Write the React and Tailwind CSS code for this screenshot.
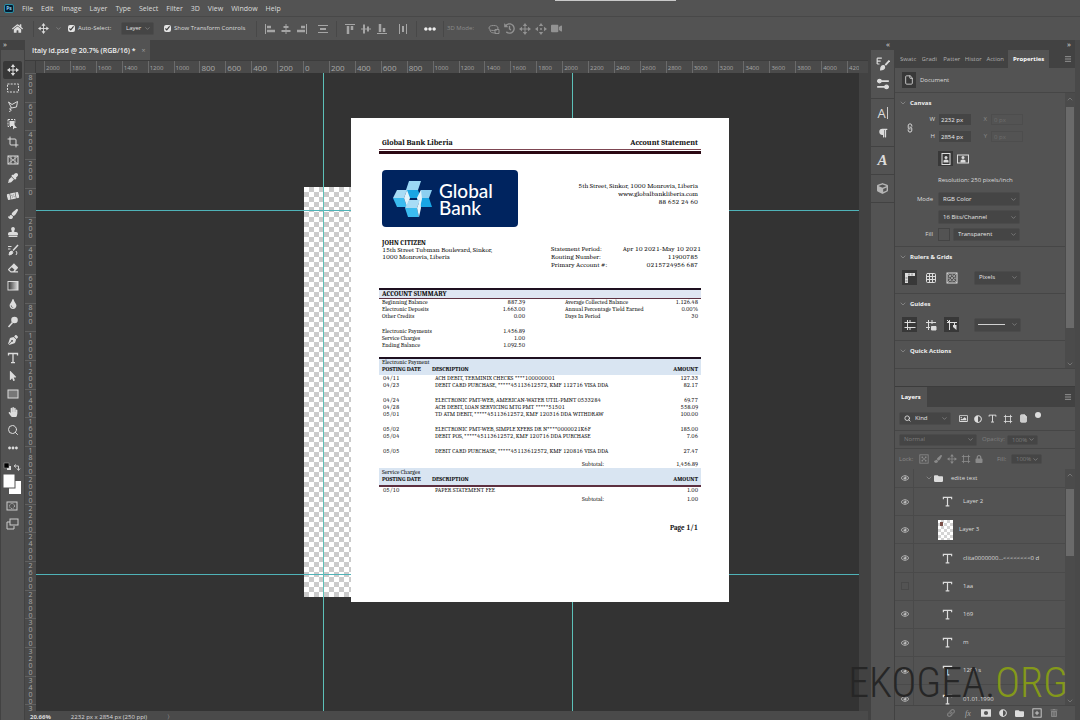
import React, { useState } from 'react';
import { ChevronDown, ChevronUp, Menu, File, Grid3x3, Crop, Search } from 'lucide-react';
import {
  FaHome, FaEyeDropper, FaPaintBrush, FaStamp, FaEraser, FaTint, FaBandAid, FaPenNib,
  FaMousePointer, FaHandPaper, FaEllipsisH, FaFolder, FaLock, FaTrashAlt, FaAdjust,
  FaCube, FaParagraph, FaRegEye, FaLink, FaVideo, FaHistory, FaRegImage,
} from 'react-icons/fa';

const menus = ['File', 'Edit', 'Image', 'Layer', 'Type', 'Select', 'Filter', '3D', 'View', 'Window', 'Help'];

const hRuler = [2000, 1800, 1600, 1400, 1200, 1000, 800, 600, 400, 200, 0, 200, 400, 600, 800, 1000, 1200,
  1400, 1600, 1800, 2000, 2200, 2400, 2600, 2800, 3000, 3200, 3400, 3600, 3800, 4000, 4200];

const vRuler = [800, 600, 400, 200, 0, 200, 400, 600, 800, 1000, 1200, 1400, 1600, 1800, 2000, 2200, 2400,
  2600, 2800, 3000, 3200, 3400, 3600];

/* ---------- small drawings ---------- */

function Svg({ size = 12, children, className = '' }) {
  return (
    <svg
      width={size}
      height={size}
      viewBox="0 0 12 12"
      fill="none"
      stroke="currentColor"
      strokeWidth="1"
      className={className}
      aria-hidden="true"
    >
      {children}
    </svg>
  );
}

const MoveIcon = ({ size = 12 }) => (
  <Svg size={size}>
    <path d="M6 2v8M2 6h8" />
    <path d="M6 0 8.200 3H3.800zM6 12 8.200 9H3.800zM0 6 3 3.800v4.400zM12 6 9 3.800v4.400z" fill="currentColor" stroke="none" />
  </Svg>
);

const MarqueeIcon = () => (
  <Svg><rect x=".5" y="2" width="11" height="8" strokeDasharray="2 1.2" /></Svg>
);

const LassoIcon = () => (
  <Svg><path d="M1.500 2 5 4.500 10.500 1.500 9.500 7 4.500 8 1.500 2M4.500 8C2 8 2 10 4 9.500 4.500 11 3 11.500 2 11.500" /></Svg>
);

const ObjectSelectIcon = () => (
  <Svg>
    <path d="M1 1.500h7v3M1 1.500v7h3" strokeDasharray="2 1" />
    <rect x="3" y="3.500" width="4" height="4" fill="currentColor" />
    <path d="M6 5.500v6l1.500-1.500H10z" fill="currentColor" stroke="none" />
  </Svg>
);

const FrameIcon = () => (
  <Svg><rect x="1" y="2" width="10" height="8" /><path d="M1 2l10 8M11 2 1 10M4 2v8M8 2v8" strokeWidth=".7" /></Svg>
);

const HistoryBrushIcon = () => (
  <Svg>
    <path d="M11 1 6 6.500" strokeWidth="1.500" />
    <path d="M2 11q0-4 3-4 2.500 3-3 4z" fill="currentColor" />
    <path d="M1 2.500h3.500M1 5h2.500M9 7q2 2 0 4" />
  </Svg>
);

const GradientIcon = () => (
  <Svg>
    <defs>
      <linearGradient id="gradTool"><stop stopColor="#333" /><stop offset="1" stopColor="#ddd" /></linearGradient>
    </defs>
    <rect x="1" y="1.500" width="10" height="8.500" fill="url(#gradTool)" />
  </Svg>
);

const DodgeIcon = () => (
  <Svg><circle cx="7.500" cy="4" r="3.300" fill="currentColor" stroke="none" /><path d="M5.500 6.500 1.500 11" strokeWidth="1.500" /></Svg>
);

const TypeIcon = ({ size = 12 }) => (
  <Svg size={size}><path d="M1.500 3.500V1.500h9v2M6 1.500v9M4 10.700h4" strokeWidth="1.300" /></Svg>
);

const RectIcon = () => (
  <Svg><rect x="1" y="2" width="10" height="8" fill="#777" /></Svg>
);

const AlignIcon = ({ kind }) => (
  <Svg>
    {kind === 'left' && <path d="M1.500 1v10" />}
    {kind === 'left' && <path d="M3 4h4M3 8h8" strokeWidth="2.500" />}
    {kind === 'center' && <path d="M6 1v10" />}
    {kind === 'center' && <path d="M3.500 4h5M1.500 8h9" strokeWidth="2" />}
    {kind === 'right' && <path d="M10.500 1v10" />}
    {kind === 'right' && <path d="M5 4h4M1 8h8" strokeWidth="2.500" />}
    {kind === 'spread' && <path d="M1 2.500h10M1 9.500h10" />}
    {kind === 'spread' && <path d="M3 6h6" strokeWidth="2" />}
    {kind === 'top' && <path d="M1 1.500h10" />}
    {kind === 'top' && <path d="M4 3v8M8 3v4" strokeWidth="2.500" />}
    {kind === 'middle' && <path d="M1 6h10" />}
    {kind === 'middle' && <path d="M4 1.500v9M8 3.500v5" strokeWidth="2" />}
    {kind === 'bottom' && <path d="M1 10.500h10" />}
    {kind === 'bottom' && <path d="M4 1v8M8 5v4" strokeWidth="2.500" />}
    {kind === 'columns' && <path d="M2.500 1v10M9.500 1v10" />}
    {kind === 'columns' && <path d="M6 3v6" strokeWidth="2" />}
  </Svg>
);

const OrbitIcon = () => (
  <Svg><ellipse cx="5.500" cy="5" rx="4.500" ry="2.500" /><path d="M2 7c0 3 4 3 6 3M7 6.500h4v4H7z" /></Svg>
);

const SlideIcon = () => (
  <Svg>
    <path d="M6 5v2M5 6h2" />
    <path d="M6 0 8.200 3H3.800zM6 12 8.200 9H3.800zM0 6 3 3.800v4.400zM12 6 9 3.800v4.400z" fill="currentColor" stroke="none" />
  </Svg>
);

const PortraitIcon = ({ wide }) => (
  <Svg>
    {wide ? <rect x=".5" y="2" width="11" height="8" /> : <rect x="2" y=".5" width="8" height="11" />}
    <circle cx="6" cy="4.500" r="1.500" fill="currentColor" stroke="none" />
    <path d="M3.500 9.500V7.500q2.500-2 5 0v2z" fill="currentColor" stroke="none" />
  </Svg>
);

const RulerIcon = () => (
  <Svg><path d="M2.500 11V2.500H11" strokeWidth="3" /><path d="M5 1.500v2M8 1.500v2M1.500 6h2M1.500 9h2" stroke="#383838" strokeWidth=".6" /></Svg>
);

const PixelGridIcon = () => (
  <Svg><rect x="1" y="1" width="10" height="10" /><circle cx="6" cy="6" r="3" strokeDasharray="1 1" /><path d="M1 1l10 10M11 1 1 11" strokeWidth=".5" /></Svg>
);

const GuidesIcon = ({ kind }) => (
  <Svg>
    <path d="M3.500 1v10" />
    {kind === 'plain' && <path d="M.5 3.500h11M.5 8.500h11M6 1v2M6 9v2" />}
    {kind === 'lock' && <path d="M1 3.500h10M1 8.500h4M7 1v4" />}
    {kind === 'lock' && <path d="M6.500 7.500h4.500v3.500H6.500z" fill="currentColor" />}
    {kind === 'smart' && <path d="M1 3.500h10M8.500 4v3M1 1l2 2" />}
    {kind === 'smart' && <path d="M7 6h3.500v5L7 8z" fill="currentColor" stroke="none" />}
  </Svg>
);

const SlidersIcon = () => (
  <Svg size={14}><path d="M1 3.500h10M1 8.500h10" strokeWidth="1.400" /><circle cx="3" cy="3.500" r="1.500" fill="currentColor" /><circle cx="9" cy="8.500" r="1.500" fill="currentColor" /></Svg>
);

const BrushSettingsIcon = () => (
  <Svg size={14}><path d="M1 1h4M1 3.500h3M1 6h2M1 1v5" /><path d="M11.500 3 8 7" strokeWidth="1.500" /><path d="M4 11q0-4 3-3.500Q8.500 10.500 4 11z" fill="currentColor" /></Svg>
);

const ShapeIcon = () => (
  <Svg size={10}><path d="M3 1v10M9 1v10M1 3h10M1 9h10" /></Svg>
);

const CheckerIcon = () => (
  <Svg size={10}><rect x="1" y="1" width="10" height="10" /><path d="M3 3h2v2H3zM7 3h2v2H7zM5 5h2v2H5zM3 7h2v2H3zM7 7h2v2H7z" fill="currentColor" stroke="none" /></Svg>
);

const MaskIcon = () => (
  <Svg size={10}><path d="M0 1.500h12v9H0zM6 3.500a2.500 2.500 0 1 0 0 5 2.500 2.500 0 1 0 0-5z" fill="currentColor" fillRule="evenodd" stroke="none" /></Svg>
);

const PlusBoxIcon = () => (
  <Svg size={10}><rect x="1" y="1" width="10" height="10" /><path d="M6 3.500v5M3.500 6h5" /></Svg>
);

const tools = [
  ['Move', <MoveIcon />], ['Marquee', <MarqueeIcon />], ['Lasso', <LassoIcon />],
  ['Object selection', <ObjectSelectIcon />], ['Crop', <Crop size={12} />], ['Frame', <FrameIcon />],
  ['Eyedropper', <FaEyeDropper size={10} />], ['Healing brush', <FaBandAid size={12} className="-rotate-12" />],
  ['Brush', <FaPaintBrush size={10} />], ['Clone stamp', <FaStamp size={10} />],
  ['History brush', <HistoryBrushIcon />], ['Eraser', <FaEraser size={10} />],
  ['Gradient', <GradientIcon />], ['Blur', <FaTint size={10} />], ['Dodge', <DodgeIcon />],
  ['Pen', <FaPenNib size={10} />], ['Type', <TypeIcon />], ['Path selection', <FaMousePointer size={10} />],
  ['Rectangle', <RectIcon />], ['Hand', <FaHandPaper size={10} />], ['Zoom', <Search size={12} />],
  ['More tools', <FaEllipsisH size={10} />],
];

/* ---------- controls ---------- */

function Select({ label, value, options = [], className = '', dim = false, children }) {
  return (
    <span className={`relative flex items-center rounded-xs border border-[#4b4b4b] bg-[#454545] ${className}`}>
      {children}
      <select
        aria-label={label}
        defaultValue={value}
        disabled={dim}
        className={`h-full w-full appearance-none bg-transparent px-1 outline-none ${dim ? 'text-[#7c7c7c] opacity-100' : 'text-[#e6e6e6]'}`}
      >
        {[value, ...options].map((o) => <option key={o}>{o}</option>)}
      </select>
      <ChevronDown size={7} className="pointer-events-none absolute right-0.5 text-[#999]" />
    </span>
  );
}

function IconButton({ label, active, children }) {
  return (
    <button
      type="button"
      aria-label={label}
      className={`flex h-[15px] w-[15px] items-center justify-center ${active ? 'bg-[#383838]' : ''}`}
    >
      {children}
    </button>
  );
}

const Divider = () => <span className="mx-[3px] h-4 w-px bg-[#484848]" />;

/* ---------- top bars ---------- */

function MenuBar() {
  return (
    <header className="relative flex h-[17px] shrink-0 items-center border-b border-[#484848] bg-[#535353] pl-1">
      <span className="flex h-[9px] w-[10px] items-center justify-center rounded-xs border border-[#2b8fa5] bg-[#001d33] text-[5px] font-bold text-[#8fd0f0]">Ps</span>
      <nav className="flex gap-2 pl-2">
        {menus.map((m) => <button type="button" key={m}>{m}</button>)}
      </nav>
      <span className="absolute top-0 left-[555px] h-px w-[121px] bg-[#c9c9c9]" />
    </header>
  );
}

function OptionsBar() {
  return (
    <div className="flex h-[23px] shrink-0 items-center bg-[#535353] pl-3 text-[6px]">
      <FaHome size={11} />
      <span className="mr-1 ml-2.5 h-4 w-px bg-[#484848]" />
      <MoveIcon size={11} />
      <ChevronDown size={7} className="mx-1.5 text-[#999]" />
      <label className="flex w-[53px] items-center gap-[3px]">
        <input type="checkbox" defaultChecked className="h-[7px] w-[7px] accent-[#e4e4e4]" />
        Auto-Select:
      </label>
      <Select label="Auto-select target" value="Layer" options={['Group']} className="h-[13px] w-[33px]" />
      <label className="ml-2.5 flex w-[86px] items-center gap-[3px] whitespace-nowrap">
        <input type="checkbox" defaultChecked className="h-[7px] w-[7px] accent-[#e4e4e4]" />
        Show Transform Controls
      </label>
      <div className="ml-[3px] flex items-center gap-1 text-[#a5a5a5]">
        <Divider />
        <AlignIcon kind="left" /><AlignIcon kind="center" /><AlignIcon kind="right" />
        <span className="w-px" />
        <AlignIcon kind="spread" />
        <Divider />
        <AlignIcon kind="top" /><AlignIcon kind="middle" /><AlignIcon kind="bottom" />
        <span className="w-px" />
        <AlignIcon kind="columns" />
        <Divider />
        <FaEllipsisH size={12} className="text-[#eee]" />
        <Divider />
      </div>
      <div className="flex items-center gap-1 text-[#929292]">
        <span className="mr-[10px] text-[#8c8c8c]">3D Mode:</span>
        <OrbitIcon /><FaHistory size={11} /><MoveIcon /><SlideIcon /><FaVideo size={11} />
      </div>
    </div>
  );
}

function Toolbar() {
  const [tool, setTool] = useState('Move');
  return (
    <aside className="flex w-[25px] shrink-0 flex-col border-x border-[#424242] bg-[#535353]">
      <div className="h-[10px] bg-[#424242] pl-0.5 text-[8px] leading-[8px]">»</div>
      <div className="mt-[11px] flex flex-col items-center">
        {tools.map(([name, icon]) => (
          <button
            type="button"
            key={name}
            aria-label={name}
            onClick={() => setTool(name)}
            className={`flex h-[18px] w-[19px] items-center justify-center rounded-xs ${tool === name ? 'bg-[#383838]' : ''}`}
          >
            {icon}
          </button>
        ))}
      </div>
      <svg width="23" height="76" viewBox="0 0 23 76" aria-label="Colour swatches">
        <rect x="6" y="9" width="4" height="4" fill="#ddd" />
        <rect x="3" y="6" width="5" height="5" fill="#000" stroke="#aaa" strokeWidth=".5" />
        <path d="M13.500 9h4v4M15 7.500 13 9l2 1.500M16 11.500l1.500 2 1.500-2" fill="none" stroke="#ccc" />
        <rect x="8" y="24" width="12" height="13" fill="#fff" />
        <rect x="2" y="17" width="12" height="14" fill="#fff" stroke="#535353" />
        <rect x="6" y="45" width="10" height="8" fill="none" stroke="#ccc" />
        <circle cx="11" cy="49" r="2.500" fill="none" stroke="#ccc" strokeDasharray="1 1" />
        <rect x="9" y="62" width="8" height="6" fill="none" stroke="#ccc" />
        <path d="M9 65H6v7h7v-3" fill="none" stroke="#ccc" />
      </svg>
    </aside>
  );
}

/* ---------- bank statement ---------- */

const summary = [
  ['Beginning Balance', '887.39', 'Average Collected Balance', '1.126.48'],
  ['Electronic Deposits', '1.663.00', 'Annual Percentage Yield Earned', '0.00%'],
  ['Other Credits', '0.00', 'Days In Period', '30'],
  null,
  ['Electronic Payments', '1.456.89'],
  ['Service Charges', '1.00'],
  ['Ending Balance', '1.092.50'],
];

const payments = [
  ['04/11', 'ACH DEBIT, TERMINIX CHECKS ****100000001', '127.33'],
  ['04/23', 'DEBIT CARD PURCHASE, *****45113612572, KMF 112716 VISA DDA', '82.17'],
  null,
  ['04/24', 'ELECTRONIC PMT-WEB, AMERICAN-WATER UTIL-PMNT 0533284', '69.77'],
  ['04/28', 'ACH DEBIT, LOAN SERVICING MTG PMT *****51501', '558.09'],
  ['05/01', 'TD ATM DEBIT, *****45113612572, KMF 120316 DDA WITHDRAW', '100.00'],
  null,
  ['05/02', 'ELECTRONIC PMT-WEB, SIMPLE XFERS DR N****0000021K6F', '185.00'],
  ['05/04', 'DEBIT POS, *****45113612572, KMF 120716 DDA PURCHASE', '7.06'],
  null,
  ['05/05', 'DEBIT CARD PURCHASE, *****45113612572, KMF 120816 VISA DDA', '27.47'],
];

function BankLogo() {
  return (
    <div className="flex h-[57px] w-[136px] items-center rounded-[4px] bg-[#00245f] pl-[11px] text-white">
      <svg width="40" height="38" viewBox="0 0 40 38" aria-hidden="true">
        <path d="M16 1h12l-3 9H13z" fill="#9bd8f5" />
        <path d="M13 10h12l3 8H16z" fill="#19a5e3" />
        <path d="M4 10h10l-3 8H0z" fill="#a8dcf5" />
        <path d="M0 18h11l3 9H4z" fill="#3bbcf0" />
        <path d="M14 10l3 8-3 9-3-9z" fill="#e2f4fc" />
        <path d="M28 10h11l-3 8H24z" fill="#8ccff0" />
        <path d="M24 18h12l3 9H27z" fill="#19a5e3" />
        <path d="M28 10l-4 8 3 9 2-8z" fill="#e2f4fc" />
        <path d="M16 20h11l-3 8H12z" fill="#a8dcf5" />
        <path d="M12 28h12l2 9H15z" fill="#3bbcf0" />
        <path d="M27 20l1 8-2 9-2-9z" fill="#e8f6fc" />
      </svg>
      <div className="pl-[6px] font-['Lato','Open_Sans',sans-serif] text-[19px] leading-[17px]">
        <div>Global</div>
        <div>Bank</div>
      </div>
    </div>
  );
}

function Transactions({ title, rows, total, titlePad = '', totalPad = '', headBorder = '' }) {
  return (
    <table className="w-full table-fixed border-collapse text-left text-[6px] leading-[7px]">
      <colgroup>
        <col className="w-[53px]" />
        <col />
        <col className="w-[44px]" />
      </colgroup>
      <thead className={`bg-[#d9e5f2] ${headBorder}`}>
        <tr><td colSpan={3} className={`pl-[3px] ${titlePad}`}>{title}</td></tr>
        <tr>
          <th className="pb-0.5 pl-[3px] whitespace-nowrap">POSTING DATE</th>
          <th className="pb-0.5">DESCRIPTION</th>
          <th className="pr-[3px] pb-0.5 text-right">AMOUNT</th>
        </tr>
      </thead>
      <tbody>
        {rows.map((row, i) => row ? (
          <tr key={i}>
            <td className="pl-[4px]">{row[0]}</td>
            <td className="pl-[3px] whitespace-nowrap">{row[1]}</td>
            <td className="pr-[3px] text-right">{row[2]}</td>
          </tr>
        ) : <tr key={i} className="h-2"><td colSpan={3} /></tr>)}
        <tr>
          <td />
          <td className={`pr-[53px] text-right ${totalPad}`}>Subtotal:</td>
          <td className={`pr-[3px] text-right ${totalPad}`}>{total}</td>
        </tr>
      </tbody>
    </table>
  );
}

function Statement() {
  return (
    <article className="flex flex-col bg-white px-7 pt-5 font-[Cambria,Caladea,'Liberation_Serif',serif] text-[7px] leading-[8px] text-[#111] tabular-nums">
      <div className="flex justify-between px-[3px] text-[8px] leading-[10px] font-bold">
        <span>Global Bank Liberia</span>
        <span>Account Statement</span>
      </div>
      <div className="mt-px h-[5px] border-t border-b-3 border-t-[#7d4652] border-b-[#2b0813]" />
      <div className="mt-4 flex justify-between px-[3px]">
        <BankLogo />
        <div className="pt-3 text-right">
          <p>5th Street, Sinkor, 1000 Monrovia, Liberia</p>
          <p>www.globalbankliberia.com</p>
          <p>88 652 24 60</p>
        </div>
      </div>
      <div className="mt-[13px] flex justify-between pl-[3px]">
        <div className="leading-[7px]">
          <p className="font-bold">JOHN CITIZEN</p>
          <p>15th Street Tubman Boulevard, Sinkor,</p>
          <p>1000 Monrovia, Liberia</p>
        </div>
        <dl className="grid w-[150px] grid-cols-[auto_1fr] pt-[5px]">
          <dt>Statement Period:</dt><dd className="text-right">Apr 10 2021-May 10 2021</dd>
          <dt>Routing Number:</dt><dd className="pr-[3px] text-right">11900785</dd>
          <dt>Primary Account #:</dt><dd className="pr-[3px] text-right">0215724956 687</dd>
        </dl>
      </div>
      <h2 className="mt-[19px] border-t-2 border-b border-t-[#1e1020] border-b-[#5d3040] bg-[#dfe6f2] pl-[3px] font-bold">ACCOUNT SUMMARY</h2>
      <table className="w-full table-fixed text-left text-[6px] leading-[7px]">
        <colgroup>
          <col className="w-[90px]" />
          <col className="w-[56px]" />
          <col />
          <col className="w-[44px]" />
        </colgroup>
        <tbody>
          {summary.map((row, i) => row ? (
            <tr key={i}>
              <td className="pl-[3px]">{row[0]}</td>
              <td className="text-right">{row[1]}</td>
              <td className="pl-10 whitespace-nowrap">{row[2]}</td>
              <td className="pr-[3px] text-right">{row[3]}</td>
            </tr>
          ) : <tr key={i} className="h-2"><td colSpan={4} /></tr>)}
        </tbody>
      </table>
      <div className="mt-2 border-t-2 border-[#1e1020]">
        <Transactions title="Electronic Payment" rows={payments} total="1,456.89" totalPad="pt-[6px]" />
      </div>
      <Transactions
        title="Service Charges"
        rows={[['05/10', 'PAPER STATEMENT FEE', '1.00']]}
        total="1.00"
        titlePad="pt-px"
        totalPad="pt-[2px]"
        headBorder="border-b-2 border-[#5d3040]"
      />
      <p className="mt-[21px] pr-[3px] text-right font-bold">Page 1/1</p>
    </article>
  );
}

/* ---------- document window ---------- */

function DocumentWindow() {
  return (
    <main className="flex min-w-0 flex-1 flex-col bg-[#424242]">
      <div className="flex h-5 shrink-0">
        <div className="flex items-center gap-[6px] bg-[#535353] pr-1 pl-[7px] font-semibold text-[#f0f0f0]">
          Italy id.psd @ 20.7% (RGB/16) *
          <button type="button" aria-label="Close document" className="font-normal text-[#999]">×</button>
        </div>
      </div>
      <div className="flex h-[13px] shrink-0 border-t border-[#3c3c3c] bg-[#4a4a4a] pr-[9px] text-[#a8a8a8]">
        <span className="w-[11px] shrink-0 border-r border-[#3c3c3c]" />
        <div className="flex min-w-0 flex-1 overflow-hidden pl-2">
          {hRuler.map((n, i) => (
            <span
              key={i}
              className={`w-[3.18%] shrink-0 border-l border-[#6a6a6a] pl-px leading-[14px] ${n >= 1000 ? 'text-[6px]' : 'text-[8px]'}`}
            >
              {n}
            </span>
          ))}
        </div>
      </div>
      <div className="flex min-h-0 flex-1 pr-[9px]">
        <div className="w-[11px] shrink-0 overflow-hidden bg-[#4a4a4a] text-[7px] leading-[7px] text-[#a8a8a8]">
          {vRuler.map((n, i) => (
            <div key={i} className="flex h-[4.5%] flex-col items-center overflow-hidden border-t border-[#606060]">
              {String(n).split('').map((d, j) => <span key={j}>{d}</span>)}
            </div>
          ))}
        </div>
        <div className="relative min-w-0 flex-1 overflow-hidden bg-[#333]">
          <div className="absolute top-[114px] left-[268px] h-[410px] w-[288px] bg-white bg-[repeating-conic-gradient(#cbcbcb_0_25%,#fff_0_50%)] bg-[size:10px_10px]" />
          <span className="absolute top-[137px] left-0 h-px w-full bg-[#4fb3b8]" />
          <span className="absolute top-[501px] left-0 h-px w-full bg-[#4fb3b8]" />
          <span className="absolute top-0 left-[287px] h-full w-px bg-[#5cc0b8]" />
          <span className="absolute top-0 left-[536px] h-full w-px bg-[#5cc0b8]" />
          <div className="absolute top-[45px] left-[315px] grid h-[484px] w-[378px]">
            <Statement />
          </div>
        </div>
      </div>
      <footer className="flex h-[9px] shrink-0 items-center gap-5 overflow-hidden bg-[#4a4a4a] pt-1 pl-[5px] text-[6px]">
        <span className="font-bold">20.66%</span>
        <span>2232 px x 2854 px (250 ppi)</span>
        <span>〉</span>
      </footer>
    </main>
  );
}

/* ---------- right panels ---------- */

function IconStrip() {
  return (
    <aside className="flex w-6 shrink-0 flex-col border-r border-[#424242] bg-[#535353]">
      <div className="h-[10px] bg-[#424242] pr-1 text-right text-[8px] leading-[8px]">«</div>
      <div className="flex h-[49px] flex-col items-center justify-evenly border-b border-[#424242]">
        <BrushSettingsIcon /><SlidersIcon />
      </div>
      <div className="flex h-12 flex-col items-center justify-evenly border-b border-[#424242]">
        <span className="border-r border-[#ccc] pr-px text-[13px] leading-[12px]">A</span>
        <FaParagraph size={10} />
      </div>
      <div className="flex h-7 items-center justify-center border-b border-[#424242] font-['Liberation_Serif',serif] text-[15px] font-bold italic">A</div>
      <div className="flex h-7 items-center justify-center border-b border-[#424242]"><FaCube size={11} className="text-[#b5b5b5]" /></div>
    </aside>
  );
}

function SectionTitle({ children }) {
  return (
    <h3 className="flex h-5 items-center gap-[3px] pl-1 font-bold text-[#f0f0f0]">
      <ChevronDown size={8} className="text-[#999]" />
      {children}
    </h3>
  );
}

function SizeField({ label, value, disabled }) {
  return (
    <label className={`flex items-center gap-1 ${disabled ? 'text-[#8a8a8a]' : ''}`}>
      <span className="w-2 text-right">{label}</span>
      <input
        defaultValue={value}
        disabled={disabled}
        className={`h-[11px] w-8 pl-0.5 outline-none ${disabled ? 'border border-[#4d4d4d] bg-transparent text-[#6e6e6e]' : 'bg-[#454545] text-[#eee]'}`}
      />
    </label>
  );
}

function Scrollbar({ gap = '', thumb }) {
  return (
    <div className="flex w-[10px] shrink-0 flex-col items-center bg-[#4b4b4b]">
      <ChevronUp size={8} className="mt-0.5 shrink-0 text-[#888]" />
      <div className={`w-2 bg-[#6a6a6a] ${gap} ${thumb}`} />
      <ChevronDown size={8} className="mt-auto shrink-0 text-[#888]" />
    </div>
  );
}

function PropertiesPanel() {
  return (
    <section className="flex h-[318px] shrink-0 flex-col">
      <div className="flex h-[18px] shrink-0 items-center bg-[#424242] text-[#b0b0b0]">
        <div className="grid w-[113px] grid-cols-5 pl-[5px]">
          {['Swatc', 'Gradi', 'Patter', 'Histor', 'Action'].map((t) => (
            <button type="button" key={t} className="overflow-hidden text-left">{t}</button>
          ))}
        </div>
        <button type="button" className="h-full bg-[#535353] px-[5px] font-bold text-white">Properties</button>
        <Menu size={8} className="mr-[3px] ml-auto text-[#bbb]" />
      </div>
      <div className="flex h-[25px] shrink-0 items-center gap-1 border-b border-[#464646] pl-[7px]">
        <span className="flex h-4 w-[14px] items-center justify-center bg-[#383838]"><File size={10} /></span>
        Document
      </div>
      <div className="flex min-h-0 flex-1">
        <div className="flex-1">
          <div className="h-[154px] border-b border-[#464646]">
            <SectionTitle>Canvas</SectionTitle>
            <div className="flex items-center pt-px">
              <FaLink size={8} className="mr-[13px] ml-[11px] -rotate-45 text-[#bbb]" />
              <div className="grid grid-cols-2 gap-x-2 gap-y-[6px]">
                <SizeField label="W" value="2232 px" />
                <SizeField label="X" value="0 px" disabled />
                <SizeField label="H" value="2854 px" />
                <SizeField label="Y" value="0 px" disabled />
              </div>
            </div>
            <div className="flex gap-[2px] pt-[9px] pl-[43px]">
              <IconButton label="Portrait" active><PortraitIcon /></IconButton>
              <IconButton label="Landscape"><PortraitIcon wide /></IconButton>
            </div>
            <p className="h-[26px] pl-[43px] leading-[28px]">Resolution: 250 pixels/inch</p>
            <div className="grid grid-cols-[38px_82px] items-center gap-x-[5px] gap-y-1">
              <span className="text-right">Mode</span>
              <Select label="Mode" value="RGB Color" options={['CMYK Color', 'Grayscale']} className="h-[14px]" />
              <span />
              <Select label="Depth" value="16 Bits/Channel" options={['8 Bits/Channel']} className="h-[14px]" />
              <span className="text-right">Fill</span>
              <span className="flex gap-[3px]">
                <button type="button" aria-label="Fill colour" className="h-[13px] w-3 border border-[#444]" />
                <Select label="Fill" value="Transparent" options={['White']} className="h-[13px] flex-1" />
              </span>
            </div>
          </div>
          <div className="h-[47px] border-b border-[#464646]">
            <SectionTitle>Rulers &amp; Grids</SectionTitle>
            <div className="flex items-center gap-[6px] pt-[3px] pl-[7px]">
              <IconButton label="Rulers" active><RulerIcon /></IconButton>
              <IconButton label="Grid"><Grid3x3 size={12} /></IconButton>
              <IconButton label="Pixel grid"><PixelGridIcon /></IconButton>
              <Select label="Units" value="Pixels" options={['Inches', 'Centimeters']} className="ml-[9px] h-[14px] w-[47px]" />
            </div>
          </div>
          <div className="h-[47px] border-b border-[#464646]">
            <SectionTitle>Guides</SectionTitle>
            <div className="flex items-center gap-[6px] pt-[3px] pl-[7px]">
              <IconButton label="Show guides" active><GuidesIcon kind="plain" /></IconButton>
              <IconButton label="Lock guides"><GuidesIcon kind="lock" /></IconButton>
              <IconButton label="Smart guides" active><GuidesIcon kind="smart" /></IconButton>
              <Select label="Guide style" value=" " className="ml-[9px] h-[14px] w-[47px]">
                <span className="pointer-events-none absolute left-[3px] h-px w-[27px] bg-[#d0d0d0]" />
              </Select>
            </div>
          </div>
          <SectionTitle>Quick Actions</SectionTitle>
        </div>
        <Scrollbar gap="mt-1" thumb="h-[221px]" />
      </div>
    </section>
  );
}

const layers = [
  { name: 'Layer 2' },
  { name: 'Layer 3', thumb: true },
  { name: 'clita0000000...<<<<<<<<0 d' },
  { name: '1aa', hidden: true },
  { name: '169' },
  { name: 'm' },
  { name: '1290 s' },
  { name: '01.01.1990' },
];

function EyeCell({ hidden }) {
  return (
    <button type="button" aria-label="Toggle visibility" className="flex h-full w-[19px] shrink-0 items-center justify-center border-r border-[#4a4a4a] pl-px">
      {hidden ? <span className="h-2 w-2 border border-[#494949]" /> : <FaRegEye size={8} className="text-[#bbb]" />}
    </button>
  );
}

function LayersPanel() {
  return (
    <section className="flex min-h-0 flex-1 flex-col border-t border-[#3c3c3c]">
      <div className="flex h-5 shrink-0 items-center bg-[#424242]">
        <button type="button" className="h-full bg-[#535353] px-[6px] font-bold text-white">Layers</button>
        <Menu size={8} className="mr-[3px] ml-auto text-[#bbb]" />
      </div>
      <div className="flex h-6 shrink-0 items-center border-b border-[#464646] pl-1">
        <Select label="Filter type" value="Kind" options={['Name']} className="h-[13px] w-[52px] pl-1">
          <Search size={7} strokeWidth={3} className="shrink-0" />
        </Select>
        <div className="ml-2 flex items-center gap-[6px]">
          <FaRegImage size={9} /><FaAdjust size={8} /><TypeIcon size={9} /><ShapeIcon />
          <File size={9} className="fill-[#ccc]" />
        </div>
        <span className="mb-2 ml-[7px] h-[6px] w-[6px] rounded-full bg-[#ddd]" />
      </div>
      <div className="flex h-[18px] shrink-0 items-center border-b border-[#464646] pl-1 text-[#808080]">
        <Select label="Blend mode" value="Normal" dim className="h-3 w-[78px]" />
        <span className="w-[30px] pl-[5px]">Opacity:</span>
        <Select label="Opacity" value="100%" dim className="h-[10px] w-[31px]" />
      </div>
      <div className="flex h-5 shrink-0 items-center gap-1 pl-1 text-[#8a8a8a]">
        <span className="w-4">Lock:</span>
        <CheckerIcon />
        <FaPaintBrush size={8} className="mx-px" />
        <MoveIcon size={10} />
        <ShapeIcon />
        <FaLock size={8} className="mr-2.5" />
        <span className="w-[10px]">Fill:</span>
        <Select label="Fill opacity" value="100%" dim className="h-[10px] w-[31px]" />
      </div>
      <div className="flex min-h-0 flex-1">
        <div className="flex min-w-0 flex-1 flex-col">
          <div className="flex h-[19px] shrink-0 items-center border-b border-[#4a4a4a]">
            <EyeCell />
            <ChevronDown size={8} className="mr-px ml-[11px] text-[#999]" />
            <FaFolder size={9} className="mr-2" />
            edite text
          </div>
          <ul className="min-h-0 flex-1 overflow-hidden">
            {layers.map((l) => (
              <li key={l.name} className="flex h-[13%] items-center border-b border-[#4a4a4a]">
                <EyeCell hidden={l.hidden} />
                {l.thumb ? (
                  <span className="mr-[6px] ml-6 flex h-5 w-[15px] bg-white bg-[repeating-conic-gradient(#d4d4d4_0_25%,#fff_0_50%)] bg-[size:6px_6px]">
                    <span className="mt-0.5 ml-0.5 h-1 w-[3px] bg-[#7b5048]" />
                  </span>
                ) : (
                  <span className="mr-[10px] ml-7"><TypeIcon size={11} /></span>
                )}
                <span className="whitespace-nowrap">{l.name}</span>
              </li>
            ))}
          </ul>
        </div>
        <Scrollbar gap="mt-[10px]" thumb="h-[67px]" />
      </div>
      <div className="flex h-[15px] shrink-0 items-center justify-end gap-2 border-t border-[#464646] pr-[17px]">
        <FaLink size={8} className="text-[#808080]" />
        <i className="w-[10px] text-center font-['Liberation_Serif',serif] text-[8px] text-[#aaa]">fx</i>
        <MaskIcon /><FaAdjust size={8} /><FaFolder size={9} /><PlusBoxIcon />
        <FaTrashAlt size={8} className="text-[#858585]" />
      </div>
    </section>
  );
}

function App() {
  return (
    <div className="relative flex h-screen flex-col overflow-hidden bg-[#535353] font-['Open_Sans','Noto_Sans',sans-serif] text-[7px] leading-[9px] font-medium text-[#dcdcdc]">
      <MenuBar />
      <OptionsBar />
      <div className="flex min-h-0 flex-1">
        <Toolbar />
        <DocumentWindow />
        <div className="flex shrink-0 border-l-3 border-[#424242]">
          <IconStrip />
          <div className="flex w-[180px] flex-col bg-[#535353] text-[6px]">
            <div className="h-[10px] shrink-0 bg-[#424242] pr-1 text-right text-[8px] leading-[8px]">»</div>
            <PropertiesPanel />
            <div className="h-[18px] shrink-0 border-t border-[#464646]" />
            <LayersPanel />
          </div>
          <div className="w-[5px] bg-[#494949]" />
        </div>
      </div>
      <div className="pointer-events-none absolute right-3 bottom-4 font-['Roboto_Condensed','Liberation_Sans_Narrow',sans-serif] text-[42px] leading-[42px] font-light text-[#262626]">
        EKOGEA.<span className="text-[#84991a]">ORG</span>
      </div>
    </div>
  );
}

export default App;
